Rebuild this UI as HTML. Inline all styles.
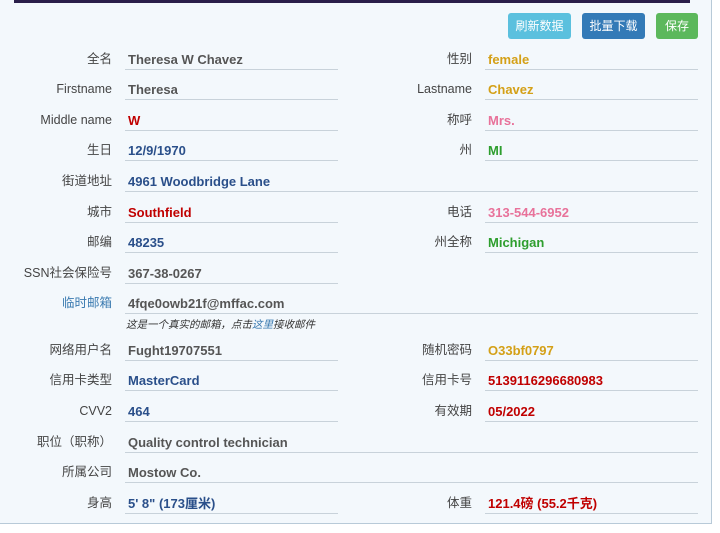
<!DOCTYPE html><html><head><meta charset="utf-8"><style>
body{margin:0;width:720px;height:533px;background:#fff;position:relative;overflow:hidden;font-family:"Liberation Sans","Noto Sans CJK SC",sans-serif}
.panel{position:absolute;left:0;top:0;width:711px;height:523px;background:#f3f8fc;border-right:1px solid #b8cad8;border-bottom:1px solid #b8cad8}
.top{position:absolute;left:14px;top:0;width:676px;height:3px;background:#2a1f4a}
.btn{position:absolute;top:13px;height:26px;line-height:26px;color:#fff;font-size:12px;text-align:center;border-radius:3px}
.l{position:absolute;font-size:12.5px;line-height:16px;height:16px;color:#444;text-align:right;width:100px;white-space:nowrap}
.v{position:absolute;font-size:13px;line-height:16px;height:16px;font-weight:bold;color:#555;white-space:nowrap}
.u{position:absolute;height:1px;background:#c8d2da}
</style></head><body><div class="panel"></div><div class="top"></div>
<div class="btn" style="left:508px;width:63px;background:#5bc0de">刷新数据</div>
<div class="btn" style="left:582px;width:63px;background:#337ab7">批量下载</div>
<div class="btn" style="left:656px;width:42px;background:#5cb85c">保存</div>
<div id="c"></div>
<script>
var rows=[
[52,'全名','Theresa W Chavez','#555','性别','female','#d4a017'],
[82,'Firstname','Theresa','#555','Lastname','Chavez','#d4a017'],
[113,'Middle name','W','#c00000','称呼','Mrs.','#e8729a'],
[143,'生日','12/9/1970','#2a4f8a','州','MI','#2e9e2e'],
[174,'街道地址','4961 Woodbridge Lane','#2a4f8a',null],
[205,'城市','Southfield','#c00000','电话','313-544-6952','#e8729a'],
[235,'邮编','48235','#2a4f8a','州全称','Michigan','#2e9e2e'],
[266,'SSN社会保险号','367-38-0267','#555',null,null,null,1],
[296,'临时邮箱','4fqe0owb21f@mffac.com','#555',null],
[343,'网络用户名','Fught19707551','#555','随机密码','O33bf0797','#d4a017'],
[373,'信用卡类型','MasterCard','#2a4f8a','信用卡号','5139116296680983','#c00000'],
[404,'CVV2','464','#2a4f8a','有效期','05/2022','#c00000'],
[435,'职位（职称）','Quality control technician','#555',null],
[465,'所属公司','Mostow Co.','#555',null],
[496,'身高','5\' 8"  (173厘米)','#2a4f8a','体重','121.4磅 (55.2千克)','#c00000']];
var h='';
rows.forEach(function(r){var y=r[0];
h+='<div class="l" style="left:12px;top:'+(y-1)+'px;'+(r[1]=='临时邮箱'?'color:#3a7ab0':'')+'">'+r[1]+'</div>';
h+='<div class="v" style="left:128px;top:'+(y)+'px;color:'+r[3]+'">'+r[2]+'</div>';
var uy=y+17;
if(r[4]){h+='<div class="l" style="left:372px;top:'+(y-1)+'px">'+r[4]+'</div><div class="v" style="left:488px;top:'+(y)+'px;color:'+r[6]+'">'+r[5]+'</div>';
h+='<div class="u" style="left:125px;width:213px;top:'+uy+'px"></div><div class="u" style="left:485px;width:213px;top:'+uy+'px"></div>';}
else if(r[7]){h+='<div class="u" style="left:125px;width:213px;top:'+uy+'px"></div>';}
else h+='<div class="u" style="left:125px;width:573px;top:'+uy+'px"></div>';
});
h+='<div style="position:absolute;left:126px;top:317px;font-size:10.5px;font-style:italic;color:#333">这是一个真实的邮箱，点击<span style="color:#3a7ab0">这里</span>接收邮件</div>';
document.getElementById('c').innerHTML=h;
</script></body></html>
